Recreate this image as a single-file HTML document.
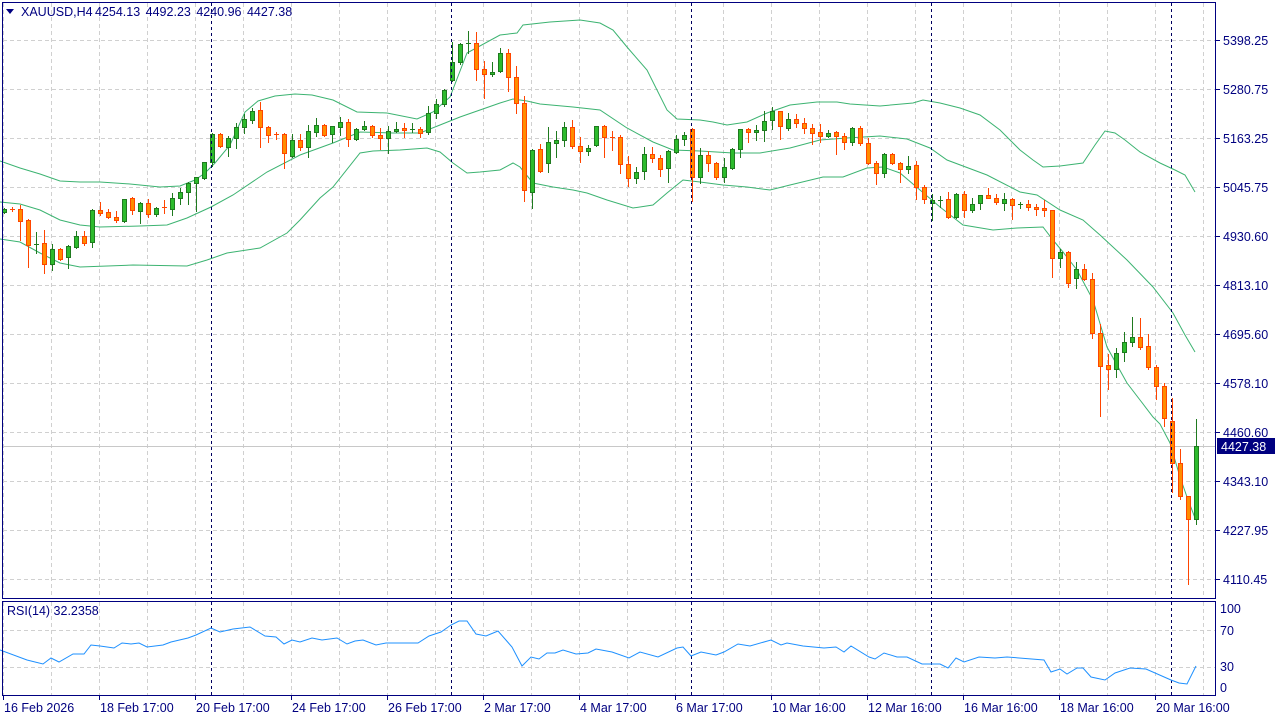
<!DOCTYPE html>
<html><head><meta charset="utf-8"><style>
html,body{margin:0;padding:0;background:#fff;width:1280px;height:720px;overflow:hidden}
svg{display:block}
text{font-family:"Liberation Sans",sans-serif;font-size:12px;fill:#000080;white-space:pre}
</style></head><body>
<svg id="s" width="1280" height="720" xmlns="http://www.w3.org/2000/svg">
<rect width="1280" height="720" fill="#fff"/>
<g id="grid" stroke="#d0d0d0" stroke-dasharray="4,3" stroke-width="1"></g>
<line x1="3" y1="446.5" x2="1216" y2="446.5" stroke="#c8c8c8"/>
<g id="bands" fill="none" stroke="#3cb371" stroke-width="1"></g>
<g id="candles"></g>
<g id="sep" stroke="#000060" stroke-dasharray="3,3" stroke-width="1"></g>
<polyline id="rsi" fill="none" stroke="#1e90ff" stroke-width="1"/>
<rect x="2.5" y="2.5" width="1213" height="596" fill="none" stroke="#000080"/>
<rect x="2.5" y="601.5" width="1213" height="94" fill="none" stroke="#000080"/>
<path d="M6 9 L14 9 L10 14 Z" fill="#000080"/>
<text x="21" y="16" style="font-size:12.5px">XAUUSD,H4</text>
<text x="95" y="16" style="font-size:12.5px;word-spacing:2px">4254.13 4492.23 4240.96 4427.38</text>
<text x="7" y="615" style="font-size:12.5px">RSI(14) 32.2358</text>
<g id="axis"></g>
<rect x="1217" y="438" width="58" height="16" fill="#000080"/>
<text x="1221" y="451" style="fill:#fff;font-size:12.5px">4427.38</text>
</svg>
<script>
var NS="http://www.w3.org/2000/svg";
function el(p,n,a,t){var e=document.createElementNS(NS,n);for(var k in a)e.setAttribute(k,a[k]);if(t)e.textContent=t;p.appendChild(e);return e;}
var grid=document.getElementById('grid'),ax=document.getElementById('axis');
var prices=["5398.25","5280.75","5163.25","5045.75","4930.60","4813.10","4695.60","4578.10","4460.60","4343.10","4227.95","4110.45"];
for(var i=0;i<12;i++){var y=40+49*i;el(grid,'line',{x1:3,y1:y+.5,x2:1216,y2:y+.5});
 el(ax,'line',{x1:1216,y1:y+.5,x2:1220,y2:y+.5,stroke:'#000080'});
 el(ax,'text',{x:1223,y:y+5,style:'font-size:12.5px'},prices[i]);}
for(var x=3;x<1216;x+=48){el(grid,'line',{x1:x+.5,y1:3,x2:x+.5,y2:598});el(grid,'line',{x1:x+.5,y1:602,x2:x+.5,y2:695});}
el(grid,'line',{x1:3,y1:630.5,x2:1216,y2:630.5});el(grid,'line',{x1:3,y1:667.5,x2:1216,y2:667.5});
[["100",613],["70",635],["30",671],["0",692]].forEach(function(a){el(ax,'text',{x:1220,y:a[1],style:'font-size:12.5px'},a[0]);});
var labs=["16 Feb 2026","18 Feb 17:00","20 Feb 17:00","24 Feb 17:00","26 Feb 17:00","2 Mar 17:00","4 Mar 17:00","6 Mar 17:00","10 Mar 16:00","12 Mar 16:00","16 Mar 16:00","18 Mar 16:00","20 Mar 16:00"];
for(var i=0;i<13;i++){var x=3+96*i;el(ax,'line',{x1:x+.5,y1:696,x2:x+.5,y2:700,stroke:'#000080'});el(ax,'text',{x:x+1,y:712,style:'font-size:12.5px'},labs[i]);}
var sep=document.getElementById('sep');
[211,451,691,931,1171].forEach(function(x){el(sep,'line',{x1:x+.5,y1:3,x2:x+.5,y2:598});el(sep,'line',{x1:x+.5,y1:602,x2:x+.5,y2:695});});
var D="g209,212,208,213;o209,209,207,211;o209,221,205,240;o220,245,219,267;g244,244,232,253;o243,264,230,273;g249,264,244,270;o249,259,248,260;g246,257,245,268;g236,247,231,248;o236,243,231,245;g210,242,209,247;o210,213,202,215;o212,217,209,218;o217,220,211,222;g199,221,199,222;o198,210,197,214;g203,211,202,223;o203,214,199,217;g208,214,207,216;o207,207,200,213;g198,209,193,215;g192,198,188,204;g183,192,182,204;g177,183,177,211;g162,178,162,179;g134,162,133,166;o134,146,133,147;g138,147,136,156;g127,138,123,148;g119,127,114,133;g111,120,108,123;o110,127,102,147;o127,135,126,142;o134,134,132,139;o134,153,133,168;g140,156,134,157;o140,147,134,150;g131,147,125,157;g125,132,118,136;o125,135,124,136;g126,134,126,142;g122,127,117,135;o122,139,119,146;g129,139,128,140;g126,129,121,130;o126,135,125,137;o135,138,128,149;g131,138,126,153;g129,131,122,132;o128,130,123,137;g129,129,123,132;o129,133,127,137;g113,132,106,134;g104,113,99,118;g90,104,89,106;g62,80,42,81;g44,62,43,64;g43,43,31,53;o43,69,32,80;o69,74,61,98;g72,74,62,76;g53,71,48,72;o53,77,49,91;o77,103,66,113;o103,190,96,201;g150,192,149,208;o149,171,144,172;g142,163,127,172;g140,143,131,157;g127,140,122,146;o127,146,120,148;o146,151,137,162;g148,151,145,155;g126,145,126,146;o126,137,125,157;o137,137,131,150;o137,164,135,173;o164,178,156,186;g172,178,167,183;g154,171,147,179;o154,158,147,162;o158,169,155,176;g151,168,150,182;g139,152,135,153;g135,139,132,145;o129,177,128,201;g155,177,148,183;o155,163,151,171;o163,177,162,179;g167,177,158,182;g149,168,148,169;g129,149,129,157;o129,132,128,142;g130,132,125,140;g121,130,111,141;g111,120,107,129;o111,126,111,139;g119,128,113,130;o119,123,114,127;o123,128,118,133;o128,133,124,144;o132,136,124,142;g133,136,130,137;o132,136,131,154;o136,142,133,149;g128,142,127,145;o128,143,126,145;o143,163,138,164;o163,173,161,184;g154,173,153,177;o154,163,153,164;o163,169,162,182;g166,169,156,173;o165,187,161,199;o187,199,185,203;g200,203,194,220;g200,200,196,207;o199,217,192,218;g194,217,193,218;o194,210,191,217;g204,210,198,212;g195,203,195,209;o195,198,188,198;o198,202,194,204;g199,203,193,210;o199,205,198,219;g204,204,202,208;o204,207,200,210;o207,209,204,215;o208,210,200,216;o210,258,210,277;g252,258,249,267;o252,283,251,287;g269,278,262,288;o269,279,264,280;o279,333,273,338;o333,366,324,416;o365,369,354,389;g353,369,348,377;g342,352,332,361;g337,342,317,346;o337,347,318,349;o346,367,334,369;o367,386,365,399;o386,418,383,426;o421,463,398,492;o463,496,449,499;o496,519,496,584;g446,519,419,524";
var cg=document.getElementById('candles');
D.split(';').forEach(function(s,i){var c=s[0],a=s.slice(1).split(',').map(Number);var x=4+8*i;
 var wc=c=='g'?'#1f7a1f':'#ff4500',fc=c=='g'?'#2dbb2d':'#ff8c00';
 el(cg,'line',{x1:x+.5,y1:a[2],x2:x+.5,y2:a[3]+1,stroke:wc});
 if(a[1]-a[0]<1){el(cg,'line',{x1:x-2,y1:a[0]+.5,x2:x+3,y2:a[0]+.5,stroke:wc});}
 else el(cg,'rect',{x:x-1.5,y:a[0]+.5,width:4,height:a[1]-a[0],fill:fc,stroke:wc});
});
var bg=document.getElementById('bands');
var U="0,161 20,168 40,174 60,181 80,182 100,182 130,184 160,187 180,186 195,180 205,173 215,163 230,145 245,112 258,101 275,96 295,94 312,95 333,100 357,112 387,113 417,119 433,112 450,97 467,53 500,35 517,33 523,25 550,22 580,20 600,23 613,30 627,47 647,70 667,110 677,119 700,120 713,122 727,125 747,122 767,113 790,105 817,102 837,102 850,104 880,106 913,103 923,100 940,103 960,108 980,115 1000,130 1020,150 1033,160 1043,167 1060,166 1083,163 1095,145 1105,131 1115,133 1125,140 1140,152 1160,163 1175,170 1185,175 1195,192";
var M="0,202 20,204 40,210 60,220 80,225 100,227 140,226 167,225 187,218 211,207 233,195 267,172 300,155 333,143 360,132 393,133 420,133 440,125 460,117 480,110 500,103 513,99 527,101 540,104 573,107 600,110 627,128 653,142 673,150 700,151 733,153 760,153 790,148 820,140 847,138 880,136 907,139 930,148 947,160 987,175 1020,192 1037,195 1060,210 1083,220 1100,235 1127,260 1153,287 1173,313 1185,335 1195,352";
var L="0,239 20,242 40,253 60,263 80,267 133,265 187,266 207,260 227,253 260,248 287,233 300,220 320,198 333,187 360,153 373,151 400,150 427,148 440,152 453,163 467,173 480,172 500,170 513,163 520,167 533,183 553,187 573,190 587,193 607,200 633,208 653,205 667,193 683,180 700,182 723,185 747,187 770,190 790,185 823,177 843,177 867,168 883,167 900,173 920,190 940,207 963,225 993,230 1017,228 1043,227 1053,240 1063,252 1077,270 1093,300 1107,347 1127,383 1140,400 1153,417 1160,424 1170,443 1180,477 1187,497 1195,518";
[U,M,L].forEach(function(p){el(bg,'polyline',{points:p});});
document.getElementById('rsi').setAttribute('points',"0,650 27,660 43,664 51,658 59,662 73,654 84,654 91,645 100,646 114,648 122,643 131,644 139,643 147,647 163,645 171,642 188,638 196,635 211,628 220,632 233,629 250,627 265,636 276,637 284,644 292,640 300,642 312,638 322,640 337,638 347,644 355,641 363,640 376,645 386,643 418,643 429,636 441,632 451,625 459,621 467,621 476,634 486,636 498,631 512,647 522,666 531,657 539,659 547,653 555,653 563,650 576,654 588,653 596,649 612,652 629,658 640,652 658,657 677,648 683,647 691,656 701,652 716,655 724,652 738,644 750,646 771,640 781,645 787,643 803,646 824,648 836,647 844,652 851,646 869,657 875,659 884,653 897,657 907,657 922,664 940,664 948,668 956,658 964,662 979,657 995,658 1007,657 1044,660 1051,672 1060,669 1067,674 1077,668 1083,668 1091,677 1105,680 1115,673 1130,668 1146,669 1171,680 1179,683 1187,684 1196,666");
</script>
</body></html>
